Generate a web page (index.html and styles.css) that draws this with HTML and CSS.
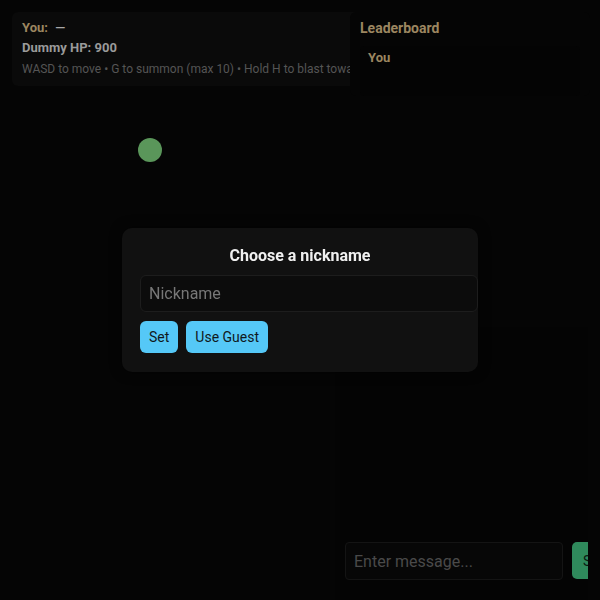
FILE: index.html
```html
<!DOCTYPE html>
<html>
<head>
<meta charset="utf-8">
<link rel="stylesheet" href="styles.css">
</head>
<body>
<div class="game">
  <div class="hud">
    <div class="hud-you"><span class="label">You:</span> <span class="dash">—</span></div>
    <div class="hud-hp">Dummy HP: 900</div>
    <div class="hud-help">WASD to move • G to summon (max 10) • Hold H to blast towa</div>
  </div>
  <div class="board">
    <div class="board-title">Leaderboard</div>
    <div class="board-row">You</div>
  </div>
  <div class="player"></div>
  <div class="chat">
    <div class="chat-log"></div>
    <div class="chat-bar">
      <input class="chat-input" type="text" placeholder="Enter message...">
      <button class="chat-send">Send</button>
    </div>
  </div>
</div>
<div class="backdrop">
  <div class="modal">
    <div class="modal-title">Choose a nickname</div>
    <input class="modal-input" type="text" placeholder="Nickname">
    <div class="modal-actions">
      <button class="btn">Set</button>
      <button class="btn">Use Guest</button>
    </div>
  </div>
</div>
</body>
</html>
```
FILE: styles.css
```css
html, body {
  margin: 0;
  padding: 0;
  width: 600px;
  height: 600px;
  overflow: hidden;
  background: #050505;
  font-family: Roboto, "Liberation Sans", sans-serif;
}
.game {
  position: relative;
  width: 600px;
  height: 600px;
  overflow: hidden;
}
.hud {
  position: absolute;
  left: 12px;
  top: 12px;
  width: 373px;
  padding: 6px 10px 8px;
  background: #0a0a0a;
  border-radius: 6px;
  white-space: nowrap;
}
.hud-you {
  font-size: 13px;
  font-weight: 700;
  line-height: 20px;
  color: #9c8660;
}
.hud-you .dash {
  margin-left: 4px;
  color: #a8a8a8;
}
.hud-hp {
  font-size: 13px;
  font-weight: 700;
  line-height: 20px;
  color: #9a9a9a;
}
.hud-help {
  margin-top: 2px;
  font-size: 12px;
  line-height: 18px;
  color: #555;
}
.board {
  position: absolute;
  left: 350px;
  top: 12px;
  width: 220px;
  height: 72px;
  padding: 6px 10px 6px 10px;
  background: #050505;
  border-radius: 6px;
}
.board-title {
  font-size: 14px;
  font-weight: 700;
  line-height: 20px;
  color: #9c8660;
}
.board-row {
  margin-top: 8px;
  height: 44px;
  padding: 3px 8px;
  font-size: 13px;
  font-weight: 700;
  line-height: 18px;
  color: #9c8660;
  background: #040404;
  border-radius: 4px;
}
.player {
  position: absolute;
  left: 138px;
  top: 138px;
  width: 24px;
  height: 24px;
  border-radius: 50%;
  background: #5a965a;
}
.chat {
  position: absolute;
  left: 335px;
  top: 327px;
  width: 253px;
  height: 273px;
  display: flex;
  flex-direction: column;
  background: #040404;
  overflow: hidden;
}
.chat-log {
  flex: 1;
}
.chat-bar {
  display: flex;
  gap: 9px;
  padding: 0 0 20px 10px;
}
.chat-input {
  width: 200px;
  height: 36px;
  padding: 0 8px;
  flex: none;
  background: #070707;
  border: 1px solid #141414;
  border-radius: 4px;
  color: #ccc;
  font-family: Roboto, "Liberation Sans", sans-serif;
  font-size: 16px;
  outline: none;
}
.chat-input::placeholder {
  color: #4a4a4a;
}
.chat-send {
  flex: none;
  height: 37px;
  padding: 0 11px;
  border: none;
  border-radius: 5px;
  background: #2f8a5c;
  color: #0b1a12;
  font-family: Roboto, "Liberation Sans", sans-serif;
  font-size: 14px;
}
.backdrop {
  position: fixed;
  inset: 0;
  display: flex;
  align-items: center;
  justify-content: center;
}
.modal {
  width: 320px;
  padding: 18px 18px 19px;
  background: #111;
  border-radius: 10px;
  box-shadow: 0 0 12px rgba(0, 0, 0, 0.6);
}
.modal-title {
  text-align: center;
  font-size: 16px;
  font-weight: 700;
  line-height: 20px;
  color: #f0f0f0;
  margin-bottom: 9px;
}
.modal-input {
  display: block;
  width: 100%;
  height: 35px;
  padding: 0 8px;
  background: #0c0c0c;
  border: 1px solid #1d1d1d;
  border-radius: 6px;
  color: #ddd;
  font-family: Roboto, "Liberation Sans", sans-serif;
  font-size: 16px;
  outline: none;
}
.modal-input::placeholder {
  color: #777;
}
.modal-actions {
  display: flex;
  gap: 8px;
  margin-top: 9px;
}
.btn {
  height: 32px;
  padding: 0 9px;
  border: none;
  border-radius: 6px;
  background: #55c8f7;
  color: #10181c;
  font-family: Roboto, "Liberation Sans", sans-serif;
  font-size: 14px;
}
```
